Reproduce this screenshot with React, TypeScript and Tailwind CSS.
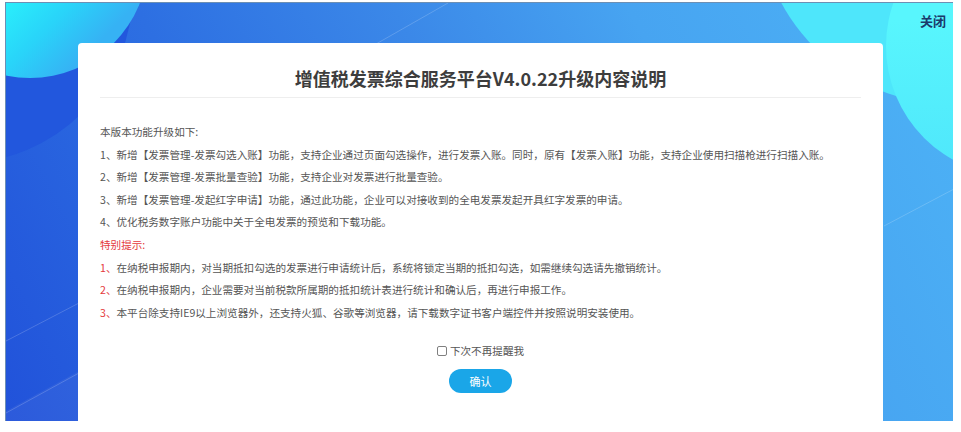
import React from "react";

const features = [
  "1、新增【发票管理-发票勾选入账】功能，支持企业通过页面勾选操作，进行发票入账。同时，原有【发票入账】功能，支持企业使用扫描枪进行扫描入账。",
  "2、新增【发票管理-发票批量查验】功能，支持企业对发票进行批量查验。",
  "3、新增【发票管理-发起红字申请】功能，通过此功能，企业可以对接收到的全电发票发起开具红字发票的申请。",
  "4、优化税务数字账户功能中关于全电发票的预览和下载功能。",
];

const tips = [
  ["1", "在纳税申报期内，对当期抵扣勾选的发票进行申请统计后，系统将锁定当期的抵扣勾选，如需继续勾选请先撤销统计。"],
  ["2", "在纳税申报期内，企业需要对当前税款所属期的抵扣统计表进行统计和确认后，再进行申报工作。"],
  ["3", "本平台除支持IE9以上浏览器外，还支持火狐、谷歌等浏览器，请下载数字证书客户端控件并按照说明安装使用。"],
];

export default function App() {
  return (
    <div
      className="w-[961px] h-[432px] bg-white pl-[5px] pt-[2px]"
      style={{ fontFamily: '"Noto Sans CJK SC", "Noto Sans", sans-serif' }}
    >
      <div className="relative w-[948px] h-[419px] overflow-hidden border-t border-l border-[#6d8fb3] bg-[linear-gradient(62deg,#2152da_0%,#2d6fe2_30%,#3b88e8_52%,#47a4f1_72%,#4db3f6_100%)] flex flex-col pl-[72px] pt-[40px]">
        {/* decorative circles */}
        <div className="absolute left-[-217px] top-[-184px] w-[344px] h-[344px] rounded-full bg-[#2257dd]" />
        <div className="absolute left-[-94px] top-[-161px] w-[236px] h-[236px] rounded-full bg-[linear-gradient(135deg,#2af6fc_50%,#29d4f9_68%,#36b2f4_82%)]" />
        <div className="absolute left-[752px] top-[-285px] w-[386px] h-[386px] rounded-full bg-[#4ee6fb]" />
        <div className="absolute left-[880px] top-[-87px] w-[260px] h-[260px] rounded-full bg-[linear-gradient(180deg,#58f6fd_40%,#4fe6fb_100%)]" />
        <svg className="absolute left-0 top-0" width="948" height="419" viewBox="0 0 948 419">
          <polygon points="0,408 73,368 73,419 0,419" fill="#ffffff" fillOpacity="0.05" />
          <line x1="442" y1="0" x2="370" y2="41" stroke="#ffffff" strokeOpacity="0.18" strokeWidth="1" />
          <line x1="878" y1="223" x2="948" y2="186" stroke="#ffffff" strokeOpacity="0.18" strokeWidth="1" />
          <line x1="0" y1="338" x2="73" y2="300" stroke="#ffffff" strokeOpacity="0.18" strokeWidth="1" />
          <line x1="0" y1="410" x2="73" y2="370" stroke="#ffffff" strokeOpacity="0.18" strokeWidth="1" />
        </svg>

        <button className="absolute right-[7px] top-[9px] text-[13px] leading-[18px] font-bold text-[#1b3a6b]">
          关闭
        </button>

        <div className="relative z-10 w-[805px] flex-1 bg-white rounded-t-[4px] flex flex-col">
          <div className="mx-[22px] pt-[24px] pb-[8px] border-b border-[#eeeeee] text-center">
            <h1 className="text-[18px] leading-[22px] font-bold text-[#3d3d3d]">
              增值税发票综合服务平台V4.0.22升级内容说明
            </h1>
          </div>

          <div className="px-[22px] pt-[23px] text-[10.6px] leading-[22.6px] text-[#555555] whitespace-nowrap">
            <p>本版本功能升级如下:</p>
            {features.map((f) => (
              <p key={f}>{f}</p>
            ))}
            <p className="text-[#e4393c]">特别提示:</p>
            {tips.map(([n, t]) => (
              <p key={n}>
                <span className="text-[#e4393c]">{n}、</span>
                {t}
              </p>
            ))}
          </div>

          <div className="mt-[20px] h-[14px] flex items-center justify-center gap-[3px]">
            <span className="w-[10px] h-[10px] border border-[#808080] rounded-[2px] bg-white" />
            <span className="text-[10.6px] leading-[14px] text-[#555555]">下次不再提醒我</span>
          </div>

          <button className="mt-[11px] mx-auto w-[63px] h-[24px] rounded-full bg-[#1aa6e8] text-white text-[11px] leading-[24px]">
            确认
          </button>
        </div>
      </div>
    </div>
  );
}
